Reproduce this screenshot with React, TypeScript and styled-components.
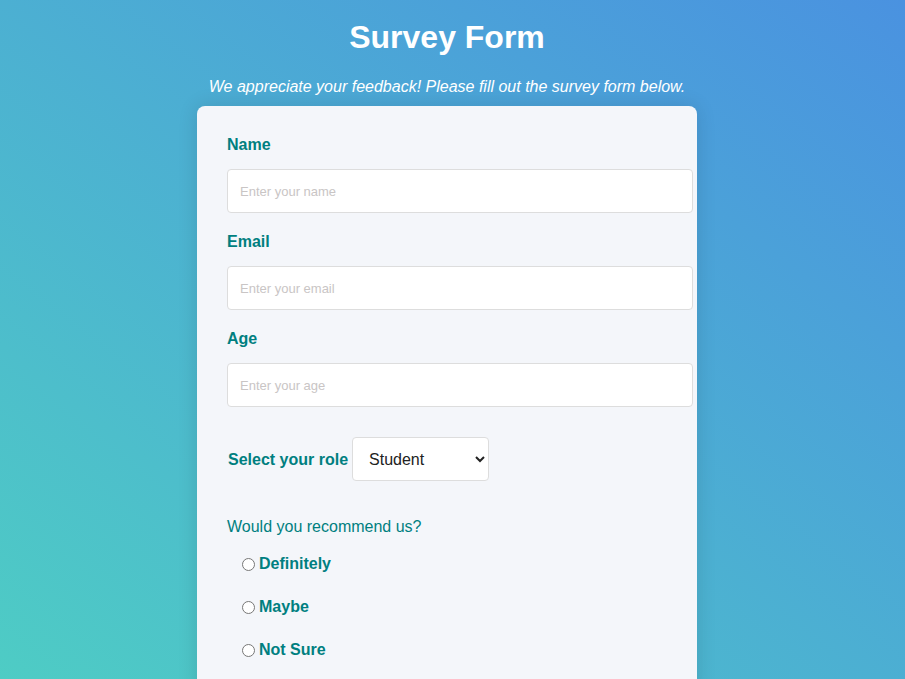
import React from 'react'
import styled, { createGlobalStyle } from 'styled-components'

const TEAL = '#007f80'

const GlobalStyle = createGlobalStyle`
  html, body {
    margin: 0;
    padding: 0;
  }

  body {
    font-family: "Liberation Sans", Arial, sans-serif;
  }

  * {
    font-family: "Liberation Sans", Arial, sans-serif;
  }
`

const Page = styled.div`
  min-height: 100vh;
  padding-right: 11px;
  background: linear-gradient(to top right, #4ecdc4, #4a92e0);
  display: flex;
  flex-direction: column;
  align-items: center;
  overflow: hidden;
`

const Title = styled.h1`
  margin: 19px 0 0;
  font-size: 32px;
  line-height: 37px;
  font-weight: 700;
  color: #fff;
`

const Subtitle = styled.p`
  margin: 22px 0 0;
  font-size: 16px;
  line-height: 18px;
  font-style: italic;
  color: #fff;
`

const Card = styled.form`
  width: 440px;
  margin-top: 10px;
  padding: 30px 30px 40px;
  background: #f4f6fa;
  border-radius: 8px;
  box-shadow: 0 0 20px rgba(0, 0, 0, 0.12);
`

const Field = styled.div`
  margin-bottom: 20px;
`

const Label = styled.label`
  display: block;
  font-size: 16px;
  line-height: 18px;
  font-weight: 700;
  color: ${TEAL};
  margin-bottom: 15px;
`

const Input = styled.input`
  display: block;
  width: 100%;
  height: 42px;
  padding: 0 12px;
  border: 1px solid #dddddd;
  border-radius: 4px;
  background: #fff;
  font-size: 13px;
  color: #333;
  outline: none;

  &::placeholder {
    color: #c9c5c5;
  }
`

const RoleRow = styled.div`
  display: flex;
  align-items: center;
  gap: 4px;
  margin-top: 30px;
  padding-left: 1px;
`

const InlineLabel = styled.label`
  font-size: 16px;
  font-weight: 700;
  color: ${TEAL};
  padding-top: 1px;
`

const Select = styled.select`
  width: 137px;
  height: 44px;
  padding: 0 10px 0 12px;
  border: 1px solid #dddddd;
  border-radius: 4px;
  background: #fff;
  font-size: 16px;
  color: #222;
`

const Question = styled.p`
  margin: 37px 0 0;
  font-size: 16px;
  line-height: 18px;
  color: ${TEAL};
`

const Options = styled.div`
  display: flex;
  flex-direction: column;
  gap: 25px;
  margin-top: 19px;
  padding-left: 10px;
`

const Option = styled.label`
  display: flex;
  align-items: center;
  height: 18px;
  font-size: 16px;
  font-weight: 700;
  color: ${TEAL};

  input {
    width: 13px;
    height: 13px;
    margin: 0 4px 0 5px;
  }
`

const App = () => (
  <>
    <GlobalStyle />
    <Page>
      <Title>Survey Form</Title>
      <Subtitle>We appreciate your feedback! Please fill out the survey form below.</Subtitle>
      <Card onSubmit={e => e.preventDefault()}>
        <Field>
          <Label htmlFor="name">Name</Label>
          <Input id="name" type="text" placeholder="Enter your name" />
        </Field>
        <Field>
          <Label htmlFor="email">Email</Label>
          <Input id="email" type="email" placeholder="Enter your email" />
        </Field>
        <Field>
          <Label htmlFor="age">Age</Label>
          <Input id="age" type="number" placeholder="Enter your age" />
        </Field>

        <RoleRow>
          <InlineLabel htmlFor="role">Select your role</InlineLabel>
          <Select id="role" defaultValue="student">
            <option value="student">Student</option>
            <option value="professional">Professional</option>
            <option value="other">Other</option>
          </Select>
        </RoleRow>

        <Question>Would you recommend us?</Question>
        <Options>
          {['Definitely', 'Maybe', 'Not Sure'].map(o => (
            <Option key={o}>
              <input type="radio" name="recommend" value={o} />
              {o}
            </Option>
          ))}
        </Options>
      </Card>
    </Page>
  </>
)

export default App
